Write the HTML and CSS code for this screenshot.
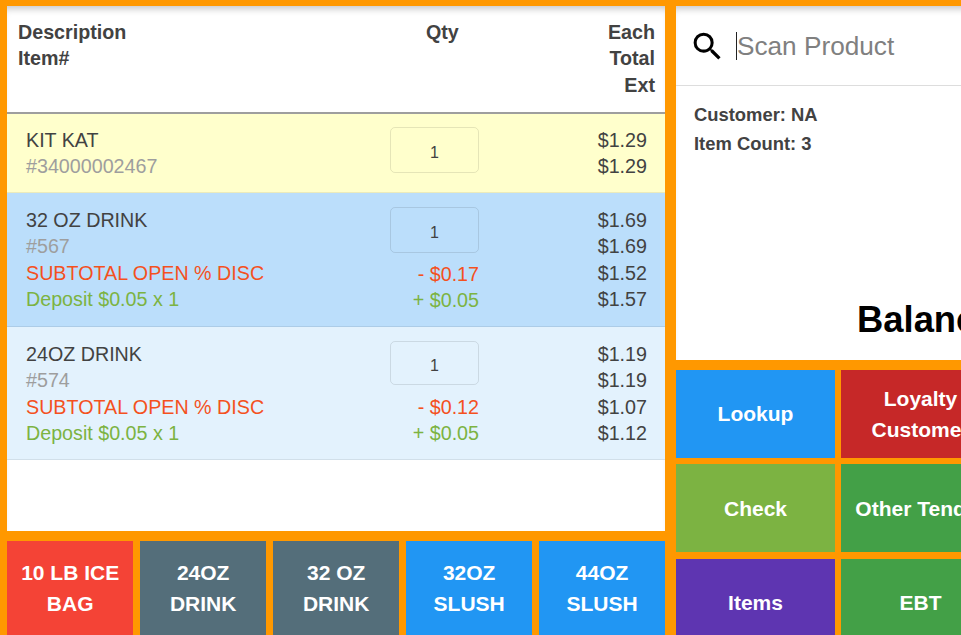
FILE: index.html
```html
<!DOCTYPE html>
<html lang="en">
<head>
<meta charset="utf-8">
<title>POS Register</title>
<link rel="stylesheet" href="styles.css">
</head>
<body>
<div class="app">
  <section class="left">
    <div class="ticket">
      <div class="thead">
        <div class="h-desc"><div>Description</div><div>Item#</div></div>
        <div class="h-qty">Qty</div>
        <div class="h-price"><div>Each</div><div>Total</div><div>Ext</div></div>
      </div>
      <div class="row row-yellow">
        <div class="c-desc"><div>KIT KAT</div><div class="sku">#34000002467</div></div>
        <div class="c-qty"><div class="qty-box">1</div></div>
        <div class="c-price"><div>$1.29</div><div>$1.29</div></div>
      </div>
      <div class="row row-blue">
        <div class="c-desc"><div>32 OZ DRINK</div><div class="sku">#567</div><div class="red">SUBTOTAL OPEN % DISC</div><div class="green">Deposit $0.05 x 1</div></div>
        <div class="c-qty"><div class="qty-box">1</div><div class="red">- $0.17</div><div class="green">+ $0.05</div></div>
        <div class="c-price"><div>$1.69</div><div>$1.69</div><div>$1.52</div><div>$1.57</div></div>
      </div>
      <div class="row row-light">
        <div class="c-desc"><div>24OZ DRINK</div><div class="sku">#574</div><div class="red">SUBTOTAL OPEN % DISC</div><div class="green">Deposit $0.05 x 1</div></div>
        <div class="c-qty"><div class="qty-box">1</div><div class="red">- $0.12</div><div class="green">+ $0.05</div></div>
        <div class="c-price"><div>$1.19</div><div>$1.19</div><div>$1.07</div><div>$1.12</div></div>
      </div>
    </div>
    <div class="quick">
      <div class="btn q-red">10 LB ICE BAG</div>
      <div class="btn q-slate">24OZ DRINK</div>
      <div class="btn q-slate">32 OZ DRINK</div>
      <div class="btn q-blue">32OZ SLUSH</div>
      <div class="btn q-blue">44OZ SLUSH</div>
    </div>
  </section>
  <section class="right">
    <div class="panel">
      <div class="search">
        <svg class="search-icon" viewBox="0 0 24 24" width="37" height="37"><path d="M15.5 14h-.79l-.28-.27A6.47 6.47 0 0 0 16 9.5 6.5 6.5 0 1 0 9.5 16c1.61 0 3.09-.59 4.23-1.57l.27.28v.79l5 4.99L20.49 19l-4.99-5zm-6 0C7.01 14 5 11.99 5 9.5S7.01 5 9.5 5 14 7.01 14 9.5 11.99 14 9.5 14z"/></svg>
        <span class="caret"></span><span class="placeholder">Scan Product</span>
      </div>
      <div class="info"><div>Customer: NA</div><div>Item Count: 3</div></div>
      <div class="balance">Balance</div>
    </div>
    <div class="actions">
      <div class="btn a-blue">Lookup</div>
      <div class="btn a-red">Loyalty Customer</div>
      <div class="btn a-lime">Check</div>
      <div class="btn a-green">Other Tender</div>
      <div class="btn a-purple">Items</div>
      <div class="btn a-green">EBT</div>
    </div>
  </section>
</div>
</body>
</html>
```
FILE: styles.css
```css
* { box-sizing: border-box; }
html, body { margin: 0; height: 100%; overflow: hidden; }
body {
  background: #ff9800;
  font-family: "Liberation Sans", Arial, sans-serif;
  color: #424242;
  font-size: 19.7px;
  line-height: 26.3px;
}
.app {
  display: flex;
  gap: 11px;
  padding: 6px 0 0 7px;
  width: 1300px;
}
.left { width: 658px; flex: none; }
.ticket {
  height: 525px;
  background: #fff;
  box-shadow: inset 0 7px 7px -4px rgba(0,0,0,.22);
}
.thead {
  display: flex;
  height: 108px;
  padding: 13px 10px 0 11px;
  border-bottom: 2px solid #9e9e9e;
  font-weight: 700;
}
.h-desc { width: 372px; }
.h-qty { width: 106px; padding-left: 36px; }
.h-price { flex: 1; text-align: right; }
.row { display: flex; padding: 14px 18px 13px 19px; border-bottom: 1px solid rgba(0,0,0,.08); }
.row-yellow { background: #ffffcc; height: 79px; padding-top: 13px; }
.row-blue { background: #bbdefb; height: 134px; }
.row-light { background: #e3f2fd; height: 133px; }
.c-desc { width: 364px; }
.c-qty { width: 89px; text-align: right; }
.c-price { flex: 1; text-align: right; }
.qty-box {
  height: 46px;
  margin-bottom: 8px;
  border: 1px solid rgba(0,0,0,.1);
  border-radius: 5px;
  text-align: center;
  font-size: 16px;
  line-height: 49px;
}
.row-light .qty-box { height: 44px; margin-bottom: 9px; line-height: 47px; }
.sku { color: #9e9e9e; }
.red { color: #f4511e; }
.green { color: #7cb342; }
.quick { display: flex; gap: 6.6px; margin-top: 10px; }
.btn {
  display: flex;
  align-items: center;
  justify-content: center;
  text-align: center;
  color: #fff;
  font-weight: 700;
  font-size: 21px;
  line-height: 31.2px;
  flex: none;
}
.quick .btn { width: 126.4px; height: 94px; padding: 0 8px; }
.q-red { background: #f44336; }
.q-slate { background: #546e7a; }
.q-blue { background: #2196f3; }
.right { width: 480px; flex: none; }
.panel {
  height: 354px;
  background: #fff;
  box-shadow: inset 0 7px 7px -4px rgba(0,0,0,.22);
  display: flex;
  flex-direction: column;
}
.search {
  display: flex;
  align-items: center;
  height: 80px;
  padding: 1px 0 0 13px;
  border-bottom: 1px solid #ddd;
}
.search-icon { flex: none; fill: #000; }
.caret { width: 1px; height: 28px; background: #222; margin-left: 10px; }
.placeholder { font-size: 26.2px; color: #808080; }
.info { padding: 14px 18px 0; font-weight: 700; font-size: 18.4px; line-height: 29px; }
.balance {
  margin-top: auto;
  padding: 0 0 19px 181px;
  color: #000;
  font-weight: 700;
  font-size: 36.4px;
  line-height: 42px;
}
.actions {
  display: grid;
  grid-template-columns: 159px 159px;
  grid-auto-rows: 88px;
  gap: 6.4px 6px;
  margin-top: 10px;
}
.actions .btn { padding: 0 8px; }
.a-blue { background: #2196f3; }
.a-red { background: #c62828; }
.a-lime { background: #7cb342; }
.a-green { background: #43a047; }
.a-purple { background: #5e35b1; }
```
